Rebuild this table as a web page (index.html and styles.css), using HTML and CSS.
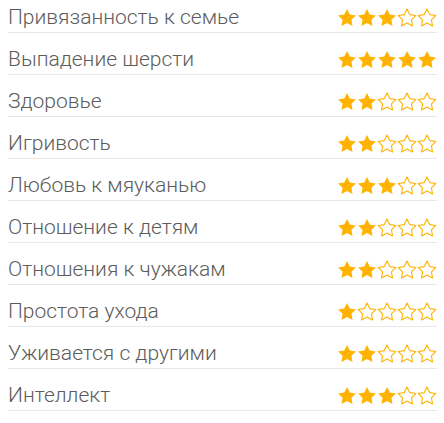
FILE: index.html
```html
<!DOCTYPE html>
<html lang="ru">
<head>
<meta charset="utf-8">
<link rel="stylesheet" href="styles.css">
</head>
<body>
<svg width="0" height="0" class="defs">
  <defs>
    <path id="star" d="M12 2.2l2.95 6.1 6.65.95-4.8 4.7 1.13 6.65L12 17.45 6.07 20.6l1.13-6.65-4.8-4.7 6.65-.95z"/>
  </defs>
</svg>
<ul class="list">
  <li class="row"><span class="label">Привязанность к семье</span><span class="stars" data-v="3"></span></li>
  <li class="row"><span class="label">Выпадение шерсти</span><span class="stars" data-v="5"></span></li>
  <li class="row"><span class="label">Здоровье</span><span class="stars" data-v="2"></span></li>
  <li class="row"><span class="label">Игривость</span><span class="stars" data-v="2"></span></li>
  <li class="row"><span class="label">Любовь к мяуканью</span><span class="stars" data-v="3"></span></li>
  <li class="row"><span class="label">Отношение к детям</span><span class="stars" data-v="2"></span></li>
  <li class="row"><span class="label">Отношения к чужакам</span><span class="stars" data-v="2"></span></li>
  <li class="row"><span class="label">Простота ухода</span><span class="stars" data-v="1"></span></li>
  <li class="row"><span class="label">Уживается с другими</span><span class="stars" data-v="2"></span></li>
  <li class="row"><span class="label">Интеллект</span><span class="stars" data-v="3"></span></li>
</ul>
<script src="app.js"></script>
</body>
</html>
```
FILE: app.js
```js
document.querySelectorAll('.stars').forEach(function (el) {
  var v = parseInt(el.getAttribute('data-v'), 10);
  var html = '';
  for (var i = 0; i < 5; i++) {
    var cls = i < v ? 'star full' : 'star empty';
    html += '<svg class="' + cls + '" viewBox="1.2 1.2 21.6 20.5" width="20" height="19"><use href="#star"/></svg>';
  }
  el.innerHTML = html;
});
```
FILE: styles.css
```css
html, body {
  margin: 0;
  padding: 0;
  background: #ffffff;
}
.defs {
  position: absolute;
  width: 0;
  height: 0;
}
.list {
  list-style: none;
  margin: 0;
  padding: 0 7px 0 8px;
}
.row {
  display: flex;
  align-items: center;
  justify-content: space-between;
  padding: 15px 0 4px 0;
  border-bottom: 1px solid #e8e8e8;
}
.row:first-child {
  padding-top: 6px;
}
.label {
  font-family: Roboto, "Noto Sans", sans-serif;
  font-weight: 300;
  font-size: 21px;
  line-height: 22px;
  color: #5c5c5c;
}
.stars {
  display: flex;
  height: 22px;
  align-items: center;
}
.star {
  display: block;
}
.star.full {
  fill: #ffb300;
  stroke: none;
}
.star.empty {
  fill: #ffffff;
  stroke: #ffb300;
  stroke-width: 1.2;
  stroke-linejoin: round;
}
```
